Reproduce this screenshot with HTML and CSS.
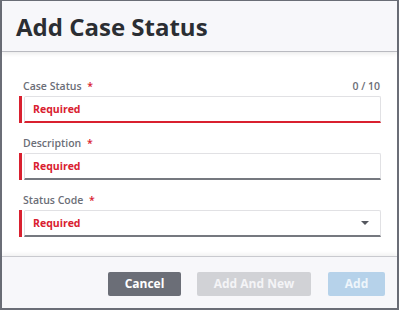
FILE: index.html
```html
<!DOCTYPE html>
<html lang="en">

<head>
    <meta charset="UTF-8">
    <meta name="viewport" content="width=device-width, initial-scale=1.0">
    <title>Add Case Status</title>
    <link rel="stylesheet" href="styles.css">
</head>

<body>
    <div class="dialog">
        <div class="dialog-header">
            <h1>Add Case Status</h1>
        </div>

        <div class="dialog-body">
            <div class="field">
                <div class="field-label">
                    <span>Case Status <span class="star">*</span></span>
                    <span class="counter">0 / 10</span>
                </div>
                <div class="field-row">
                    <div class="field-input invalid">Required</div>
                </div>
            </div>

            <div class="field">
                <div class="field-label">
                    <span>Description <span class="star">*</span></span>
                </div>
                <div class="field-row">
                    <div class="field-input">Required</div>
                </div>
            </div>

            <div class="field">
                <div class="field-label">
                    <span>Status Code <span class="star">*</span></span>
                </div>
                <div class="field-row">
                    <div class="field-input select">
                        <span>Required</span>
                        <span class="caret"></span>
                    </div>
                </div>
            </div>
        </div>

        <div class="dialog-footer">
            <button class="btn btn-cancel">Cancel</button>
            <button class="btn btn-new" disabled>Add And New</button>
            <button class="btn btn-add" disabled>Add</button>
        </div>
    </div>
</body>

</html>
```

FILE: styles.css
```css
body {
    font-family: "Open Sans", Arial, sans-serif;
    background-color: #fff;
    margin: 0;
    padding: 0;
}

.dialog {
    width: 399px;
    height: 310px;
    box-sizing: border-box;
    border: 2px solid #6b6e77;
    border-top-width: 1px;
    display: flex;
    flex-direction: column;
    background-color: #fff;
}

.dialog-header {
    height: 51px;
    box-sizing: border-box;
    background-color: #f7f7fa;
    border-bottom: 1px solid #b9bac0;
    box-shadow: 0 2px 4px rgba(0, 0, 0, 0.08);
    display: flex;
    align-items: center;
    padding-left: 14px;
}

h1 {
    margin: 0;
    font-size: 24px;
    font-weight: 700;
    color: #2b2e33;
}

.dialog-body {
    flex: 1;
    padding: 27px 16px 0 17px;
}

.field {
    margin-bottom: 13px;
}

.field-label {
    display: flex;
    justify-content: space-between;
    font-size: 10.5px;
    font-weight: 600;
    line-height: 14px;
    color: #6b6e77;
    padding-left: 4px;
    margin-bottom: 3px;
}

.star {
    color: #d9202f;
    margin-left: 3px;
}

.counter {
    padding-right: 1px;
}

.field-row {
    display: flex;
    gap: 2px;
}

.field-row::before {
    content: "";
    width: 3px;
    background-color: #d9202f;
}

.field-input {
    flex: 1;
    height: 27px;
    box-sizing: border-box;
    border: 1px solid #e1e1e4;
    border-bottom: 2px solid #75787f;
    border-radius: 2px 2px 0 0;
    padding-left: 8px;
    font-size: 10.5px;
    font-weight: 700;
    color: #d9202f;
    display: flex;
    align-items: center;
}

.field-input.invalid {
    border-bottom-color: #d9202f;
}

.select {
    justify-content: space-between;
    padding-right: 11px;
}

.caret {
    width: 0;
    height: 0;
    border-left: 4px solid transparent;
    border-right: 4px solid transparent;
    border-top: 4px solid #55585f;
}

.dialog-footer {
    height: 52px;
    box-sizing: border-box;
    background-color: #f7f7fa;
    border-top: 1px solid #c9cacf;
    box-shadow: 0 -2px 4px rgba(0, 0, 0, 0.06);
    display: flex;
    justify-content: flex-end;
    align-items: center;
    gap: 16px;
    padding-right: 12px;
    padding-top: 2px;
}

.btn {
    height: 24px;
    border: none;
    border-radius: 2px;
    font-family: "Open Sans", Arial, sans-serif;
    font-size: 12px;
    font-weight: 700;
    color: #fff;
    cursor: pointer;
}

.btn-cancel {
    width: 73px;
    background-color: #6b6e77;
}

.btn-new {
    width: 114px;
    background-color: #d1d2d6;
    color: #f4f4f6;
}

.btn-add {
    width: 57px;
    margin-left: 1px;
    background-color: #b6d2ea;
    color: #eef5fb;
}
```
